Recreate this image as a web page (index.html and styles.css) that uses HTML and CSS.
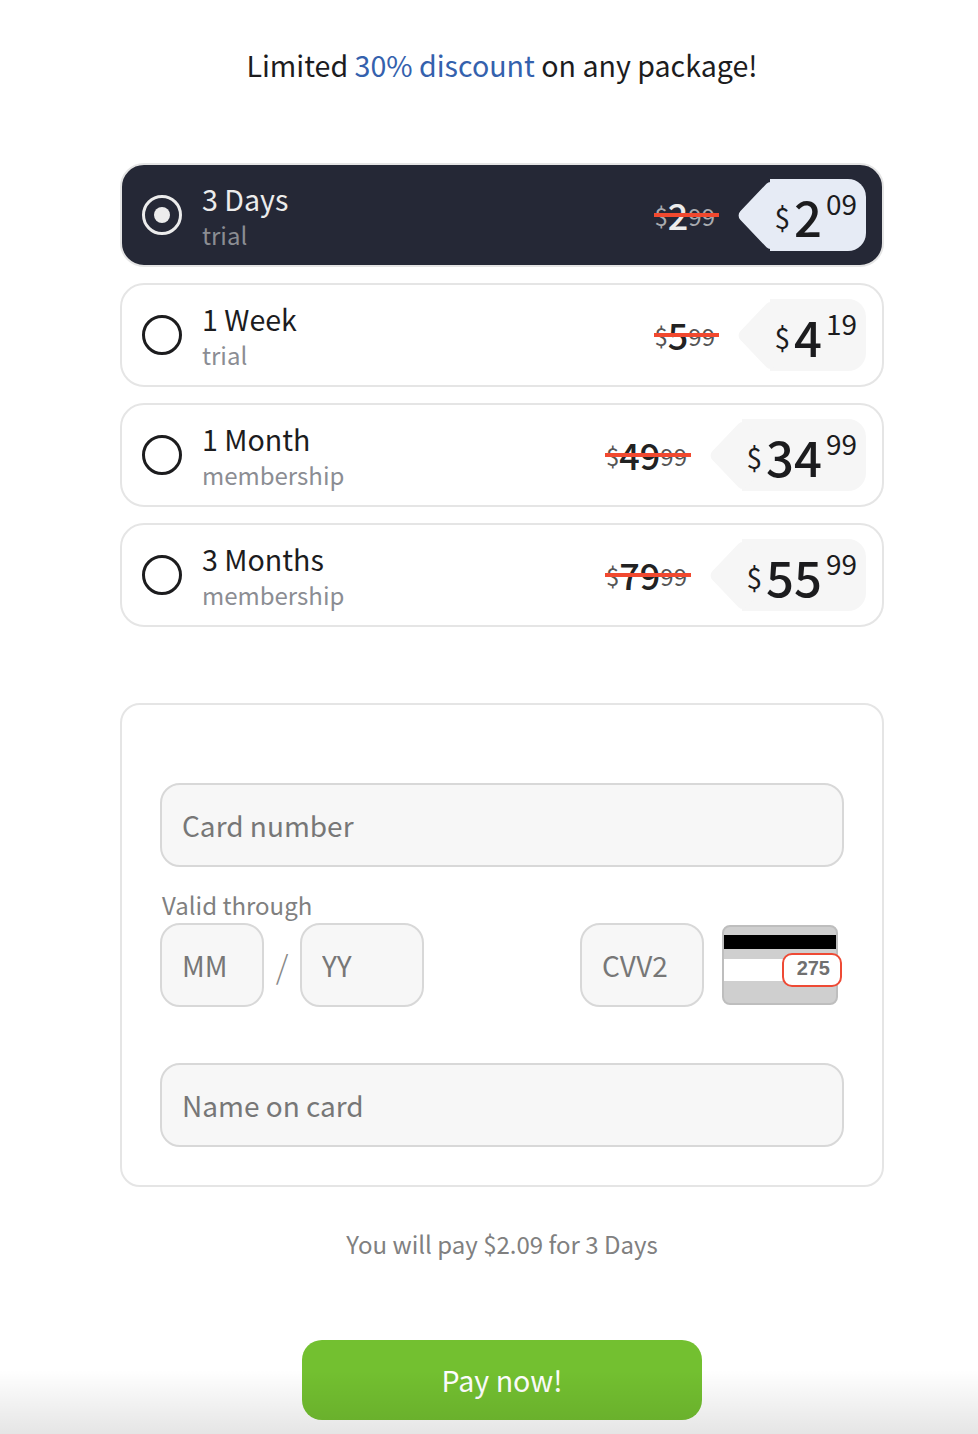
FILE: index.html
```html
<!DOCTYPE html>
<html lang="en">
<head>
<meta charset="utf-8">
<title>Checkout</title>
<link rel="stylesheet" href="styles.css">
</head>
<body>
<main class="page">
  <h1 class="headline">Limited <span class="accent">30% discount</span> on any package!</h1>

  <section class="plans">
    <div class="plan plan-active">
      <span class="radio"></span>
      <div class="plan-text"><div class="plan-name">3 Days</div><div class="plan-sub">trial</div></div>
      <div class="old"><span class="old-cur">$</span><span class="old-int">2</span><span class="old-cur">99</span></div>
      <div class="tag"><span class="cur">$</span><span class="int">2</span><span class="dec">09</span></div>
    </div>
    <div class="plan">
      <span class="radio"></span>
      <div class="plan-text"><div class="plan-name">1 Week</div><div class="plan-sub">trial</div></div>
      <div class="old"><span class="old-cur">$</span><span class="old-int">5</span><span class="old-cur">99</span></div>
      <div class="tag"><span class="cur">$</span><span class="int">4</span><span class="dec">19</span></div>
    </div>
    <div class="plan">
      <span class="radio"></span>
      <div class="plan-text"><div class="plan-name">1 Month</div><div class="plan-sub">membership</div></div>
      <div class="old"><span class="old-cur">$</span><span class="old-int">49</span><span class="old-cur">99</span></div>
      <div class="tag tag-wide"><span class="cur">$</span><span class="int">34</span><span class="dec">99</span></div>
    </div>
    <div class="plan">
      <span class="radio"></span>
      <div class="plan-text"><div class="plan-name">3 Months</div><div class="plan-sub">membership</div></div>
      <div class="old"><span class="old-cur">$</span><span class="old-int">79</span><span class="old-cur">99</span></div>
      <div class="tag tag-wide"><span class="cur">$</span><span class="int">55</span><span class="dec">99</span></div>
    </div>
  </section>

  <form class="card-form">
    <input class="field" type="text" placeholder="Card number">
    <div class="label">Valid through</div>
    <div class="field-row">
      <input class="field field-mm" type="text" placeholder="MM">
      <span class="slash">/</span>
      <input class="field field-yy" type="text" placeholder="YY">
      <input class="field field-cvv" type="text" placeholder="CVV2">
      <div class="card-back">
        <div class="stripe"></div>
        <div class="sign"></div>
        <div class="code">275</div>
      </div>
    </div>
    <input class="field field-name" type="text" placeholder="Name on card">
  </form>

  <p class="summary">You will pay $2.09 for 3 Days</p>
  <button class="pay" type="button">Pay now!</button>
</main>
<div class="fade"></div>
</body>
</html>
```

FILE: styles.css
```css
* { box-sizing: border-box; }
html, body { margin: 0; height: 1434px; overflow: hidden; background: #fff; }
body {
  position: relative;
  font-family: "Noto Sans CJK SC", "Noto Sans", sans-serif;
  color: #1c1c1e;
}
.page { width: 764px; margin-left: 120px; padding-top: 45px; }

.headline { margin: 0; font-size: 28.6px; line-height: 40px; font-weight: 400; text-align: center; color: #1c1c1e; }
.accent { color: #3461ad; }

.plans { margin-top: 78px; display: flex; flex-direction: column; gap: 16px; }
.plan {
  height: 104px;
  display: flex;
  align-items: center;
  padding: 0 16px 0 20px;
  border: 2px solid #e5e5e5;
  border-radius: 24px;
  background: #fff;
}
.plan-active { background: #252836; color: #ececec; }

.radio { flex: none; width: 40px; height: 40px; border: 3px solid #1c1c1e; border-radius: 50%; display: flex; align-items: center; justify-content: center; }
.plan-active .radio { border-color: #ececec; }
.plan-active .radio::after { content: ""; width: 16px; height: 16px; border-radius: 50%; background: #ececec; }

.plan-text { margin-left: 20px; margin-right: auto; padding-top: 4px; }
.plan-name { font-size: 28.6px; line-height: 36px; }
.plan-sub { font-size: 24px; line-height: 36px; color: #8b8d93; }

.old { position: relative; padding: 0 4px 0 1px; line-height: 40px; white-space: nowrap; }
.old::after { content: ""; position: absolute; left: 0; right: 0; top: 50%; height: 4px; margin-top: -2px; background: #f1492f; }
.old-cur { display: inline-block; font-size: 24px; font-weight: 400; color: #555; transform: translateY(-1px); }
.old-int { display: inline-block; font-size: 36px; font-weight: 500; color: #222; transform: translateY(3px); }
.plan-active .old-cur { color: #a9abb0; }
.plan-active .old-int { color: #ececec; }

.tag {
  position: relative;
  flex: none;
  width: 96px;
  height: 72px;
  margin-left: 51px;
  padding-right: 9px;
  display: flex;
  align-items: baseline;
  justify-content: flex-end;
  background: #f6f6f6;
  border-radius: 0 18px 18px 0;
  color: #1c1c1e;
  line-height: 72px;
}
.tag::before {
  content: "";
  position: absolute;
  left: -25.5px;
  top: 10.5px;
  width: 51px;
  height: 51px;
  transform: scaleX(.95) rotate(45deg);
  border-radius: 6px;
  background: inherit;
}
.tag-wide { width: 124px; }
.plan-active .tag { background: #e6ebf5; }
.cur, .int, .dec { position: relative; }
.cur { font-size: 28px; margin-right: 4px; transform: translateY(-7px); }
.int { font-size: 49px; font-weight: 500; transform: translateY(1px); }
.dec { font-size: 28px; margin-left: 4px; transform: translateY(-21px); }

.card-form {
  margin-top: 76px;
  height: 484px;
  padding: 78px 38px 38px;
  border: 2px solid #e5e5e5;
  border-radius: 20px;
}
.field {
  display: block;
  width: 100%;
  height: 84px;
  padding: 0 20px;
  border: 2px solid #d8d8d8;
  border-radius: 20px;
  background: #f7f7f7;
  font: 400 28px "Noto Sans CJK SC", "Noto Sans", sans-serif;
  color: #777;
  outline: none;
}
.field::placeholder { color: #777; opacity: 1; }
.label { margin: 21px 0 1px 2px; font-size: 24px; line-height: 34px; color: #808080; }
.field-row { display: flex; align-items: center; }
.field-mm { width: 104px; }
.slash { width: 36px; text-align: center; font-size: 32px; color: #888; font-weight: 300; }
.field-yy { width: 124px; }
.field-cvv { width: 124px; margin-left: 156px; }
.field-name { margin-top: 56px; }

.card-back {
  position: relative;
  flex: none;
  width: 116px;
  height: 80px;
  margin-left: 18px;
  padding-top: 8px;
  background: #cfcfcf;
  border: 2px solid #bebebe;
  border-radius: 8px;
}
.stripe { height: 14px; background: #000; }
.sign { height: 22px; margin-top: 10px; background: #fff; }
.code {
  position: absolute;
  left: 58px;
  top: 26px;
  width: 60px;
  height: 34px;
  border: 2px solid #ee4a35;
  border-radius: 10px;
  background: #fff;
  font: 700 20px/27px "Liberation Sans", Arial, sans-serif;
  color: #707070;
  text-align: right;
  padding-right: 10px;
}

.summary { margin: 42px 0 0; text-align: center; font-size: 24px; line-height: 30px; color: #808080; }
.pay {
  display: block;
  width: 400px;
  height: 80px;
  margin: 81px 0 0 182px;
  padding-bottom: 2px;
  border: 0;
  border-radius: 20px;
  background: #73c030;
  color: #fff;
  font: 400 28.6px "Noto Sans CJK SC", "Noto Sans", sans-serif;
}
.fade {
  position: absolute;
  left: 0;
  right: 0;
  bottom: 0;
  height: 64px;
  background: linear-gradient(to bottom, rgba(0,0,0,0), rgba(0,0,0,.1));
  pointer-events: none;
}
```
